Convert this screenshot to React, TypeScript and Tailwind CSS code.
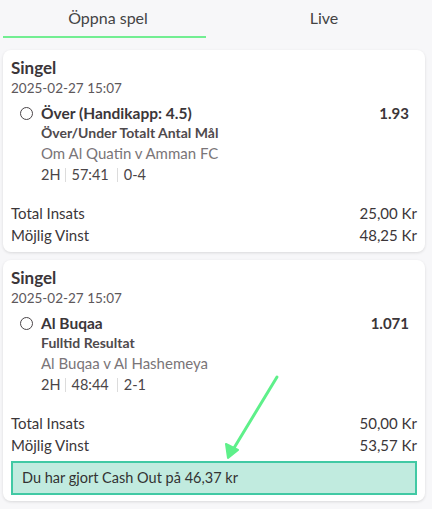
const font = { fontFamily: 'Lato, "Noto Sans", sans-serif' }

type Bet = {
  date: string
  selection: string
  odds: string
  market: string
  event: string
  period: string
  clock: string
  score: string
  stake: string
  payout: string
  cashout?: string
}

const bets: Bet[] = [
  {
    date: '2025-02-27 15:07',
    selection: 'Över (Handikapp: 4.5)',
    odds: '1.93',
    market: 'Över/Under Totalt Antal Mål',
    event: 'Om Al Quatin v Amman FC',
    period: '2H',
    clock: '57:41',
    score: '0-4',
    stake: '25,00 Kr',
    payout: '48,25 Kr',
  },
  {
    date: '2025-02-27 15:07',
    selection: 'Al Buqaa',
    odds: '1.071',
    market: 'Fulltid Resultat',
    event: 'Al Buqaa v Al Hashemeya',
    period: '2H',
    clock: '48:44',
    score: '2-1',
    stake: '50,00 Kr',
    payout: '53,57 Kr',
    cashout: 'Du har gjort Cash Out på 46,37 kr',
  },
]

function BetCard({ bet }: { bet: Bet }) {
  return (
    <div className="ml-[3px] mr-[7px] rounded-lg bg-white px-2 pt-2 pb-[6px] text-[#3b3639] shadow-[0_1px_3px_rgba(0,0,0,0.12)]">
      <div className="text-[17px] font-bold leading-5">Singel</div>
      <div className="text-[13.5px] leading-5 text-[#5d585b]">{bet.date}</div>
      <div className="mt-[5px] flex items-center pl-[9px] pr-2">
        <span className="h-[13px] w-[13px] rounded-full border-[1.5px] border-[#4a4548]" />
        <span className="ml-[8px] flex-1 text-[15.5px] font-bold leading-5">{bet.selection}</span>
        <span className="text-[15px] font-bold leading-5">{bet.odds}</span>
      </div>
      <div className="pl-[30px]">
        <div className="text-[14px] font-bold leading-5 text-[#4f4a4d]">{bet.market}</div>
        <div className="text-[15px] leading-[21px] text-[#7a7578]">{bet.event}</div>
        <div className="flex items-center text-[14.5px] leading-[21px] text-[#4a4548]">
          <span>{bet.period}</span>
          <span className="mx-[5px] h-[14px] w-px bg-[#dcdcdc]" />
          <span>{bet.clock}</span>
          <span className="ml-[8px] mr-[6px] h-[14px] w-px bg-[#dcdcdc]" />
          <span>{bet.score}</span>
        </div>
      </div>
      <div className="mt-[17px] text-[15px] leading-[22px] text-[#3b3639]">
        <div className="flex justify-between">
          <span>Total Insats</span>
          <span>{bet.stake}</span>
        </div>
        <div className="flex justify-between">
          <span>Möjlig Vinst</span>
          <span>{bet.payout}</span>
        </div>
      </div>
      {bet.cashout && (
        <div className="mt-[5px] border-2 border-[#41c9a4] bg-[#c1ebdf] px-[9px] py-[5px] text-[14.5px] leading-5 text-[#333]">
          {bet.cashout}
        </div>
      )}
    </div>
  )
}

export default function App() {
  return (
    <div className="relative min-h-[509px] bg-[#f7f7f9]" style={font}>
      <div className="flex h-10 text-[16px] text-[#444]">
        <div className="flex w-1/2 flex-col items-center">
          <div className="flex h-9 items-center">Öppna spel</div>
          <div className="ml-[3px] mr-[10px] h-[2px] self-stretch bg-[#72ee92]" />
        </div>
        <div className="flex w-1/2 justify-center">
          <div className="flex h-9 items-center">Live</div>
        </div>
      </div>
      <div className="mt-[10px] flex flex-col gap-[8px]">
        {bets.map((bet, i) => (
          <BetCard key={i} bet={bet} />
        ))}
      </div>
      <svg className="pointer-events-none absolute left-0 top-0" width="432" height="509">
        <line x1="277" y1="377" x2="234" y2="448" stroke="#5ef08a" strokeWidth="3" strokeLinecap="round" />
        <polygon points="228,458 226,444 238,450" fill="#5ef08a" stroke="#5ef08a" strokeWidth="2" strokeLinejoin="round" />
      </svg>
    </div>
  )
}
